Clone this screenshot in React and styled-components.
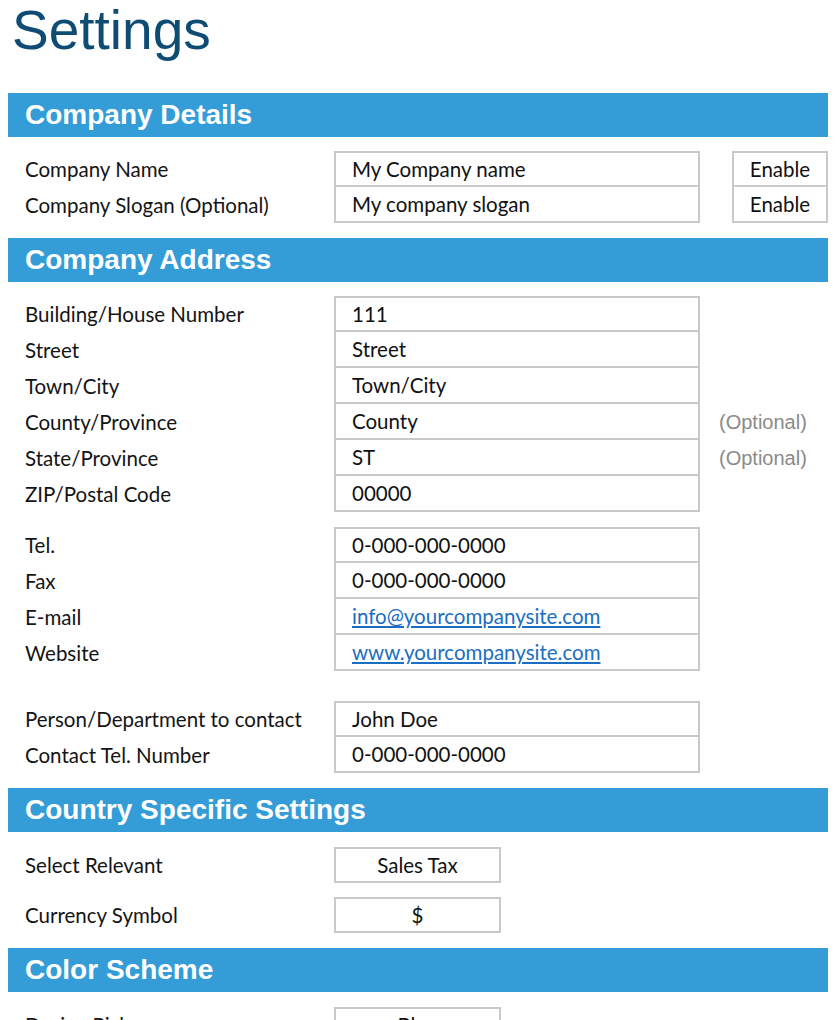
import React from 'react';
import styled, { createGlobalStyle } from 'styled-components';

const GlobalStyle = createGlobalStyle`
  html, body {
    margin: 0;
    padding: 0;
    background: #ffffff;
  }
  body {
    font-family: Lato, "Liberation Sans", sans-serif;
    color: #111111;
  }
`;

const Page = styled.div`
  padding: 0 8px;
  width: 820px;
`;

const Title = styled.h1`
  margin: 0 0 35px;
  padding: 3px 0 0 4px;
  font-family: "Liberation Sans", Arial, sans-serif;
  font-weight: normal;
  font-size: 55px;
  line-height: 55px;
  color: #0f4c74;
`;

const Bar = styled.h2`
  margin: 0;
  height: 44px;
  display: flex;
  align-items: center;
  padding-left: 17px;
  background: #349dd8;
  color: #ffffff;
  font-family: "Liberation Sans", Arial, sans-serif;
  font-weight: bold;
  font-size: 28px;
`;

const Body = styled.div`
  padding: ${p => p.$top || 14}px 0 15px;
  display: flex;
  flex-direction: column;
  gap: ${p => p.$gap || 0}px;
`;

/* stacked rows share borders; spaced rows each get a full box */
const Group = styled.div`
  display: flex;
  flex-direction: column;
  gap: ${p => p.$gap || 0}px;
  margin-top: ${p => p.$push || 0}px;
`;

const Row = styled.div`
  display: grid;
  grid-template-columns: 309px 366px auto;
  align-items: stretch;
  height: 36px;
  padding-left: 17px;
`;

const Label = styled.div`
  display: flex;
  align-items: center;
  font-size: 20.5px;
  color: #141414;
`;

const Cell = styled.div`
  box-sizing: border-box;
  display: flex;
  align-items: center;
  border: 2px solid #c9c9c9;
  border-top-width: ${p => (p.$first ? 2 : 0)}px;
  font-size: 20.5px;
  color: #111111;
`;

const Field = styled(Cell)`
  justify-content: ${p => (p.$center ? 'center' : 'flex-start')};
  width: ${p => (p.$compact ? '167px' : '366px')};
  padding-left: ${p => (p.$center ? 0 : 16)}px;
`;

const Toggle = styled(Cell)`
  justify-content: center;
  width: 96px;
  margin-left: 32px;
`;

const Link = styled.a`
  color: #1b6ec2;
  text-decoration: underline;
  text-underline-offset: 2px;
`;

const Hint = styled.div`
  display: flex;
  align-items: center;
  margin-left: 19px;
  font-family: "Liberation Sans", Arial, sans-serif;
  font-size: 20px;
  color: #8a8a8a;
`;

const details = [
  { label: 'Company Name', value: 'My Company name' },
  { label: 'Company Slogan (Optional)', value: 'My company slogan' },
];

const address = [
  { label: 'Building/House Number', value: '111' },
  { label: 'Street', value: 'Street' },
  { label: 'Town/City', value: 'Town/City' },
  { label: 'County/Province', value: 'County', optional: true },
  { label: 'State/Province', value: 'ST', optional: true },
  { label: 'ZIP/Postal Code', value: '00000' },
];

const contact = [
  { label: 'Tel.', value: '0-000-000-0000' },
  { label: 'Fax', value: '0-000-000-0000' },
  { label: 'E-mail', value: 'info@yourcompanysite.com', href: 'mailto:info@yourcompanysite.com' },
  { label: 'Website', value: 'www.yourcompanysite.com', href: '#' },
];

const person = [
  { label: 'Person/Department to contact', value: 'John Doe' },
  { label: 'Contact Tel. Number', value: '0-000-000-0000' },
];

const FieldRow = ({ label, value, href, optional, toggle, first }) => (
  <Row>
    <Label>{label}</Label>
    <Field $first={first}>{href ? <Link href={href}>{value}</Link> : value}</Field>
    {toggle && <Toggle $first={first}>Enable</Toggle>}
    {optional && <Hint>(Optional)</Hint>}
  </Row>
);

const FieldList = ({ rows, toggle, push }) => (
  <Group $push={push}>
    {rows.map((r, i) => (
      <FieldRow key={r.label} {...r} toggle={toggle} first={i === 0} />
    ))}
  </Group>
);

const PickRow = ({ label, value }) => (
  <Row>
    <Label>{label}</Label>
    <Field $compact $center $first>{value}</Field>
  </Row>
);

const App = () => (
  <Page>
    <GlobalStyle />
    <Title>Settings</Title>

    <Bar>Company Details</Bar>
    <Body>
      <FieldList rows={details} toggle />
    </Body>

    <Bar>Company Address</Bar>
    <Body $gap={15}>
      <FieldList rows={address} />
      <FieldList rows={contact} />
      <FieldList rows={person} push={15} />
    </Body>

    <Bar>Country Specific Settings</Bar>
    <Body $top={15}>
      <Group $gap={14}>
        <PickRow label="Select Relevant" value="Sales Tax" />
        <PickRow label="Currency Symbol" value="$" />
      </Group>
    </Body>

    <Bar>Color Scheme</Bar>
    <Body $top={15}>
      <Group $gap={14}>
        <PickRow label="Design Pick" value="Blue" />
      </Group>
    </Body>
  </Page>
);

export default App;
